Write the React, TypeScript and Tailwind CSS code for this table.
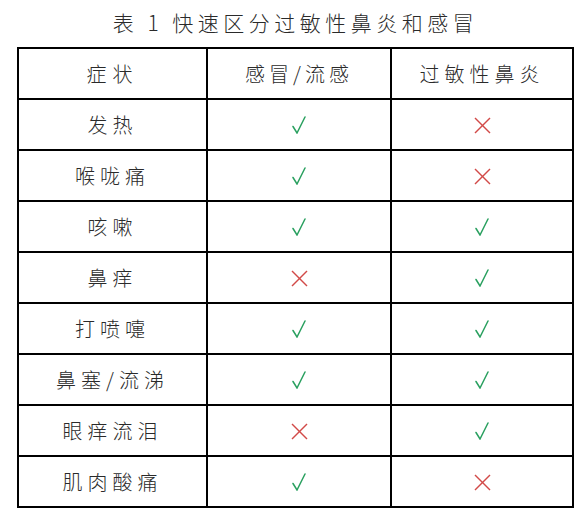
import React from "react";

const Check = () => (
  <svg width="14" height="18" viewBox="0 0 14 18" className="inline-block">
    <polyline points="1,10.5 5,17 13,1" fill="none" stroke="#2aa060" strokeWidth="1.5" strokeLinejoin="miter" strokeLinecap="round" />
  </svg>
);

const Cross = () => (
  <svg width="17" height="17" viewBox="0 0 17 17" className="inline-block">
    <line x1="1" y1="1" x2="16" y2="16" stroke="#d24a48" strokeWidth="1.4" />
    <line x1="16" y1="1" x2="1" y2="16" stroke="#d24a48" strokeWidth="1.4" />
  </svg>
);

type Row = { name: string; cold: boolean; allergy: boolean };

const rows: Row[] = [
  { name: "发热", cold: true, allergy: false },
  { name: "喉咙痛", cold: true, allergy: false },
  { name: "咳嗽", cold: true, allergy: true },
  { name: "鼻痒", cold: false, allergy: true },
  { name: "打喷嚏", cold: true, allergy: true },
  { name: "鼻塞/流涕", cold: true, allergy: true },
  { name: "眼痒流泪", cold: false, allergy: true },
  { name: "肌肉酸痛", cold: true, allergy: false },
];

export default function App() {
  return (
    <div
      className="w-[587px] h-[517px] bg-white text-[#2a2a2a] font-light"
      style={{ fontFamily: '"Noto Sans CJK SC", "Noto Sans", sans-serif' }}
    >
      <div className="h-[47px] flex items-center justify-center pl-[4px] pb-[2px]">
        <span className="text-[21px] leading-none tracking-[4.5px]">表 1 快速区分过敏性鼻炎和感冒</span>
      </div>
      <table className="ml-[17px] w-[555px] border-collapse border-2 border-black table-fixed">
        <colgroup>
          <col className="w-[189px]" />
          <col className="w-[184px]" />
          <col className="w-[182px]" />
        </colgroup>
        <tbody>
          <tr className="h-[51px]">
            <td className="border-2 border-black text-center text-[20px] tracking-[6px] p-0">症状</td>
            <td className="border-2 border-black text-center text-[20px] tracking-[4px] p-0">感冒/流感</td>
            <td className="border-2 border-black text-center text-[20px] tracking-[5px] p-0">过敏性鼻炎</td>
          </tr>
          {rows.map((r) => (
            <tr key={r.name} className="h-[51px]">
              <td className="border-2 border-black text-center text-[20px] tracking-[5px] p-0">{r.name}</td>
              <td className="border-2 border-black text-center p-0 align-middle">
                <div className="flex items-center justify-center pt-[1px]">{r.cold ? <Check /> : <Cross />}</div>
              </td>
              <td className="border-2 border-black text-center p-0 align-middle">
                <div className="flex items-center justify-center pt-[1px]">{r.allergy ? <Check /> : <Cross />}</div>
              </td>
            </tr>
          ))}
        </tbody>
      </table>
    </div>
  );
}
